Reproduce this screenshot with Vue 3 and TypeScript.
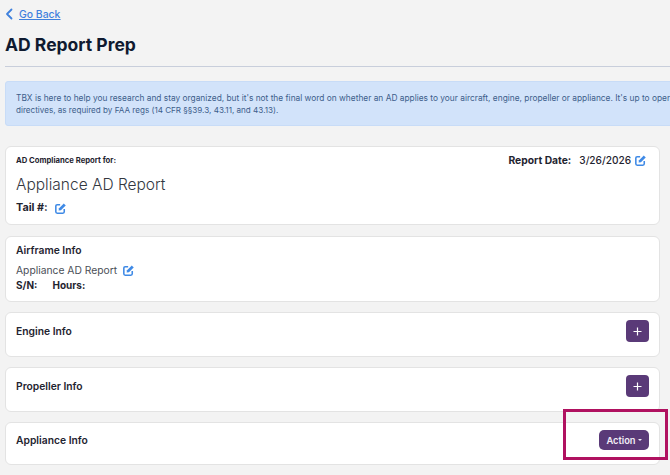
<script setup lang="ts">
const plainCards = [
  { title: 'Engine Info' },
  { title: 'Propeller Info' },
];
</script>

<template>
  <div class="page">
    <a class="back" href="#">
      <svg width="9" height="12" viewBox="0 0 9 12" class="chev"><path d="M6.5 1.5 2 6l4.5 4.5" fill="none" stroke="#3f80dd" stroke-width="1.8" stroke-linecap="round" stroke-linejoin="round"/></svg>
      <span>Go Back</span>
    </a>
    <h1>AD Report Prep</h1>
    <div class="rule"></div>
    <div class="alert">
      <p class="line-one">TBX is here to help you research and stay organized, but it's not the final word on whether an AD applies to your aircraft, engine, propeller or appliance. It's up to operators to comply with all applicable directives,</p>
      <p>directives, as required by FAA regs (14 CFR §§39.3, 43.11, and 43.13).</p>
    </div>

    <section class="card first">
      <div class="first-top">
        <div class="for">AD Compliance Report for:</div>
        <div class="date"><b>Report Date:</b><span>3/26/2026</span>
          <svg class="edit" viewBox="0 0 12 12"><path d="M5.6 1.9H2.4A1.5 1.5 0 0 0 .9 3.4v6.2a1.5 1.5 0 0 0 1.5 1.5h6.2a1.5 1.5 0 0 0 1.5-1.5V6.6" fill="none" stroke="#3f8ae6" stroke-width="1.7"/><path d="M3.9 8.3l.5-2.6L9.6.5l2.1 2.1-5.2 5.2z" fill="#3f8ae6"/></svg>
        </div>
      </div>
      <div class="name">Appliance AD Report</div>
      <div class="tail"><b>Tail #:</b>
        <svg class="edit" viewBox="0 0 12 12"><path d="M5.6 1.9H2.4A1.5 1.5 0 0 0 .9 3.4v6.2a1.5 1.5 0 0 0 1.5 1.5h6.2a1.5 1.5 0 0 0 1.5-1.5V6.6" fill="none" stroke="#3f8ae6" stroke-width="1.7"/><path d="M3.9 8.3l.5-2.6L9.6.5l2.1 2.1-5.2 5.2z" fill="#3f8ae6"/></svg>
      </div>
    </section>

    <section class="card airframe">
      <h2>Airframe Info</h2>
      <div class="sub">Appliance AD Report
        <svg class="edit" viewBox="0 0 12 12"><path d="M5.6 1.9H2.4A1.5 1.5 0 0 0 .9 3.4v6.2a1.5 1.5 0 0 0 1.5 1.5h6.2a1.5 1.5 0 0 0 1.5-1.5V6.6" fill="none" stroke="#3f8ae6" stroke-width="1.7"/><path d="M3.9 8.3l.5-2.6L9.6.5l2.1 2.1-5.2 5.2z" fill="#3f8ae6"/></svg>
      </div>
      <div class="sn"><b>S/N:</b><b>Hours:</b></div>
    </section>

    <section v-for="c in plainCards" :key="c.title" class="card row">
      <h2>{{ c.title }}</h2>
      <button class="plus" type="button" :aria-label="'Add ' + c.title">
        <svg width="9" height="9" viewBox="0 0 9 9"><path d="M4.5.5v8M.5 4.5h8" stroke="#fff" stroke-width="1.2"/></svg>
      </button>
    </section>

    <section class="card row last">
      <h2>Appliance Info</h2>
      <button class="action" type="button">Action<i></i></button>
    </section>

    <div class="highlight"></div>
  </div>
</template>

<style scoped>
.page {
  position: relative;
  width: 670px;
  height: 475px;
  box-sizing: border-box;
  padding: 0 10px 0 5px;
  overflow: hidden;
  background: #f3f3f3;
  font-family: Inter, "Open Sans", sans-serif;
  color: #1f2430;
}
.back {
  display: flex;
  align-items: center;
  gap: 5px;
  height: 28px;
  font-size: 10.4px;
  font-weight: 500;
  color: #3f80dd;
}
.chev { flex: none; }
.back span { text-decoration: underline; }
h1 {
  margin: 4px 0 0;
  font-size: 17.5px;
  line-height: 26px;
  font-weight: 700;
  color: #0f1a30;
}
.rule {
  height: 1px;
  margin-top: 8px;
  width: 700px;
  background: #c8cedb;
}
.alert {
  width: 700px;
  height: 45px;
  box-sizing: border-box;
  margin-top: 14px;
  padding: 11px 10px;
  background: #d2e3fa;
  border: 1px solid #c8dcf7;
  border-radius: 3px 0 0 3px;
  color: #3d5e8b;
  font-size: 8.1px;
  line-height: 11.5px;
}
.alert p { margin: 0; white-space: nowrap; }
.alert .line-one { font-size: 8.35px; }
.card {
  box-sizing: border-box;
  background: #fff;
  border: 1px solid #e3e3e3;
  border-radius: 6px;
  padding: 0 10px;
  margin-top: 10px;
}
.first { margin-top: 20px; height: 79px; padding-top: 8px; }
.first-top { display: flex; justify-content: space-between; align-items: flex-start; }
.for { font-size: 7.7px; font-weight: 700; line-height: 11px; }
.date {
  display: flex;
  align-items: center;
  font-size: 10.3px;
  line-height: 13px;
  margin-right: 3px;
  margin-top: -1px;
}
.date b { font-weight: 700; margin-right: 8px; }
.date span { font-weight: 500; font-size: 10.1px; }
.date .edit { margin-left: 4px; }
.edit { width: 11px; height: 11px; flex: none; }
.name {
  margin-top: 7px;
  font-size: 15.5px;
  line-height: 22px;
  font-weight: 300;
  color: #33373f;
}
.tail {
  display: flex;
  align-items: center;
  gap: 7px;
  margin-top: 5px;
  font-size: 10.8px;
  line-height: 14px;
}
.tail b { font-weight: 700; }
h2 {
  margin: 0;
  font-size: 10.3px;
  font-weight: 600;
  line-height: 14px;
  color: #1f2430;
}
.airframe { height: 66px; padding-top: 6px; margin-top: 11px; }
.sub {
  display: flex;
  align-items: center;
  gap: 6px;
  margin-top: 6px;
  font-size: 10.3px;
  line-height: 14px;
  color: #4b4f57;
}
.sn {
  display: flex;
  gap: 15px;
  font-size: 10px;
  line-height: 14px;
  margin-top: 1px;
}
.sn b { font-weight: 700; }
.row {
  display: flex;
  justify-content: space-between;
  align-items: flex-start;
  height: 45px;
  padding-top: 11px;
  padding-right: 10px;
}
.last { height: 43px; padding-top: 10px; }
.plus {
  width: 23px;
  height: 22px;
  margin-top: -4px;
  padding: 0;
  border: 0;
  border-radius: 4px;
  background: #5a3a78;
  display: flex;
  align-items: center;
  justify-content: center;
}
.action {
  width: 50px;
  height: 20px;
  margin-top: -3px;
  padding: 0;
  border: 0;
  border-radius: 5px;
  background: #5a3a78;
  color: #f2eef6;
  font-family: inherit;
  font-size: 9.3px;
  font-weight: 600;
  display: flex;
  align-items: center;
  justify-content: center;
  gap: 2px;
}
.action i {
  width: 0;
  height: 0;
  border-left: 2px solid transparent;
  border-right: 2px solid transparent;
  border-top: 2px solid #f2eef6;
}
.highlight {
  position: absolute;
  left: 563px;
  top: 409px;
  width: 105px;
  height: 51px;
  box-sizing: border-box;
  border: 3px solid #b01160;
}
</style>

<style>
html, body { margin: 0; overflow: hidden; background: #f3f3f3; }
</style>
